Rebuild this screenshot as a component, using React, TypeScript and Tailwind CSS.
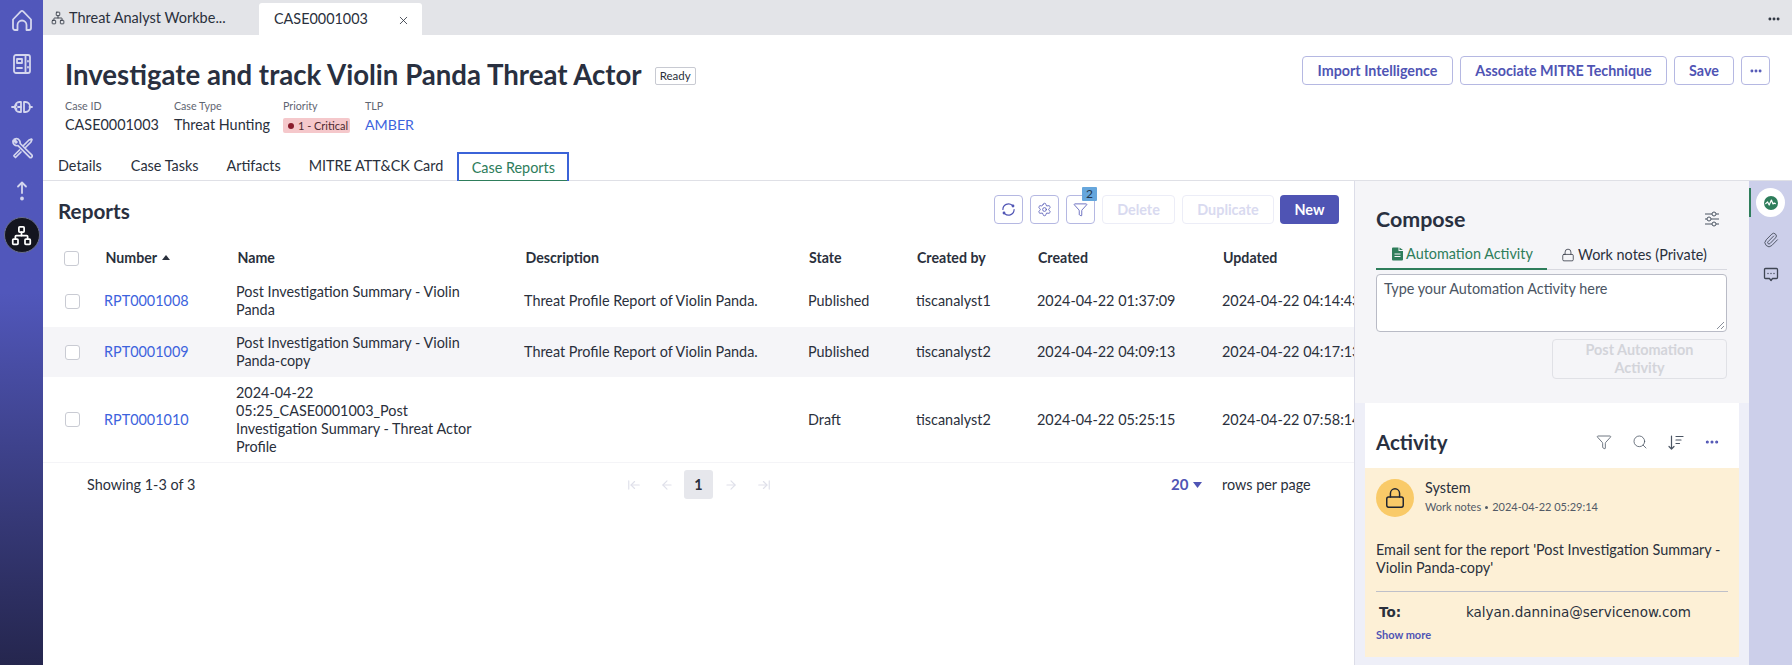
import React from "react";
import { Network, Settings, Funnel, Paperclip, Lock, Search, Ellipsis, X, ArrowLeft, ArrowRight, ArrowLeftToLine, ArrowRightToLine } from "lucide-react";

function HomeIcon() {
  return (
    <svg width="22" height="23" viewBox="0 0 22 23" fill="none" stroke="currentColor" strokeWidth="1.8" strokeLinecap="round" strokeLinejoin="round">
      <path d="M2 10.5L9.6 2.6a2 2 0 0 1 2.8 0L20 10.5V19a2 2 0 0 1-2 2h-2.5v-5a4.5 4.5 0 0 0-9 0v5H4a2 2 0 0 1-2-2z" />
    </svg>
  );
}
function BookIcon() {
  return (
    <svg width="20" height="22" viewBox="0 0 20 22" fill="none" stroke="currentColor" strokeWidth="1.8" strokeLinecap="round" strokeLinejoin="round">
      <rect x="2" y="2" width="16" height="18" rx="2" />
      <line x1="13.5" y1="2" x2="13.5" y2="20" />
      <rect x="5" y="6" width="5" height="4" />
      <line x1="5" y1="15" x2="10" y2="15" />
      <line x1="16" y1="8" x2="16" y2="8.5" />
      <line x1="16" y1="14" x2="16" y2="14.5" />
    </svg>
  );
}
function ApiIcon() {
  return (
    <svg width="22" height="14" viewBox="0 0 22 14" fill="none" stroke="currentColor" strokeWidth="1.8" strokeLinecap="round" strokeLinejoin="round">
      <path d="M1 7h2.5" /><path d="M18.5 7H21" />
      <path d="M10 2H8.5a4.5 5 0 0 0 0 10H10z" />
      <path d="M13 2h1.5a4.5 5 0 0 1 0 10H13z" />
      <path d="M3.5 7l2-2" /><path d="M3.5 7l2 2" />
      <path d="M7 7h3" />
    </svg>
  );
}
function ToolsIcon() {
  return (
    <svg width="22" height="22" viewBox="0 0 22 22" fill="none" stroke="currentColor" strokeWidth="1.7" strokeLinecap="round" strokeLinejoin="round">
      <path d="M8.5 3.5a4 4 0 0 0-5.2-1.2L6 5l-1 1-2.8-2.6A4 4 0 0 0 7 8.6l11.5 11.5a1.5 1.5 0 0 0 2.2-2.2L9.2 6.5c0-1-.2-2.2-.7-3z" />
      <path d="M12.5 8.5L18 3l2.5-1 .5.5-1 2.5-5.5 5.5" />
      <path d="M8.5 13L3 18.5a1.6 1.6 0 0 0 0 .5l1.5 1.5L10 15" />
    </svg>
  );
}
function UpIcon() {
  return (
    <svg width="14" height="22" viewBox="0 0 14 22" fill="none" stroke="currentColor" strokeWidth="1.8" strokeLinecap="round" strokeLinejoin="round">
      <path d="M7 13V3" /><path d="M3 6.5L7 2.5l4 4" />
      <circle cx="7" cy="18.5" r="1" fill="currentColor" />
    </svg>
  );
}
function SlidersIcon() {
  return (
    <svg width="16" height="16" viewBox="0 0 16 16" fill="none" stroke="#4b5563" strokeWidth="1">
      <path d="M1 3h7M12 3h3M1 8h2M7 8h8M1 13h7M12 13h3" />
      <circle cx="10" cy="3" r="2" /><circle cx="5" cy="8" r="2" /><circle cx="10" cy="13" r="2" />
    </svg>
  );
}
function SortIcon() {
  return (
    <svg width="16" height="15" viewBox="0 0 16 15" fill="none" stroke="#4b5563" strokeWidth="1.2" strokeLinecap="round" strokeLinejoin="round">
      <path d="M3.5 1v13M1 11.5L3.5 14 6 11.5" />
      <path d="M8 1.5h7M8 5h5M8 8.5h3.5" />
    </svg>
  );
}
function FileFilled() {
  return (
    <svg width="11" height="14" viewBox="0 0 11 13">
      <path fillRule="evenodd" fill="#2e7d5b" d="M0 1a1 1 0 0 1 1-1h5.5v3.5H11V12a1 1 0 0 1-1 1H1a1 1 0 0 1-1-1zM2.5 6v1h6V6zm0 2.5v1h6v-1zM7.5 0L11 2.5H7.5z" />
    </svg>
  );
}
function RefreshIcon() {
  return (
    <svg width="15" height="15" viewBox="0 0 15 15" fill="none" stroke="currentColor" strokeWidth="1.2" strokeLinecap="round">
      <path d="M1.9 7.5a5.6 5.6 0 0 1 9.3-4.2" />
      <path d="M13.1 7.5a5.6 5.6 0 0 1-9.3 4.2" />
      <circle cx="12" cy="4" r="0.8" fill="currentColor" />
      <circle cx="3" cy="11" r="0.8" fill="currentColor" />
    </svg>
  );
}
function PulseIcon() {
  return (
    <svg width="11" height="8" viewBox="0 0 11 8" fill="none" stroke="#ffffff" strokeWidth="1.2" strokeLinecap="round" strokeLinejoin="round">
      <path d="M0.7 4.6L2.6 3l1.6 3 2.2-5 1.6 4 1.2-1 1.1.6" />
    </svg>
  );
}
function MessageIcon() {
  return (
    <svg width="16" height="15" viewBox="0 0 16 15" fill="none" stroke="currentColor" strokeWidth="1.3" strokeLinejoin="round">
      <path d="M2.5 1.5h11a1 1 0 0 1 1 1v8a1 1 0 0 1-1 1H9.5L8 13.5 6.5 11.5h-4a1 1 0 0 1-1-1v-8a1 1 0 0 1 1-1z" />
      <circle cx="5" cy="6.5" r="0.7" fill="currentColor" stroke="none" />
      <circle cx="8" cy="6.5" r="0.7" fill="currentColor" stroke="none" />
      <circle cx="11" cy="6.5" r="0.7" fill="currentColor" stroke="none" />
    </svg>
  );
}

const rows = [
  { n: "RPT0001008", name: "Post Investigation Summary - Violin Panda", d: "Threat Profile Report of Violin Panda.", s: "Published", by: "tiscanalyst1", c: "2024-04-22 01:37:09", u: "2024-04-22 04:14:43", rowCls: "h-[52px]" },
  { n: "RPT0001009", name: "Post Investigation Summary - Violin Panda-copy", d: "Threat Profile Report of Violin Panda.", s: "Published", by: "tiscanalyst2", c: "2024-04-22 04:09:13", u: "2024-04-22 04:17:13", rowCls: "h-[50px] bg-[#f5f5f8]" },
  { n: "RPT0001010", name: "2024-04-22 05:25_CASE0001003_Post Investigation Summary - Threat Actor Profile", d: "", s: "Draft", by: "tiscanalyst2", c: "2024-04-22 05:25:15", u: "2024-04-22 07:58:14", rowCls: "h-[86px] border-b border-[#f4f4f7]" },
];

const grid = "grid grid-cols-[61px_132px_288px_284px_108px_121px_185px_132px] items-center";

function Box() {
  return <span className="block h-[15px] w-[15px] rounded-[3px] border border-[#c9cbd3] bg-white" />;
}

export default function App() {
  return (
    <div className="flex h-[665px] w-[1792px] overflow-hidden bg-white font-['Lato',sans-serif] text-[#2a303c]">
      <aside className="flex w-[43px] shrink-0 flex-col items-center bg-gradient-to-b from-[#5157bb] from-44% to-[#25264e] pt-[9px] text-[#d4d6ee]">
        <HomeIcon />
        <div className="mt-[21px]"><BookIcon /></div>
        <div className="mt-[25px]"><ApiIcon /></div>
        <div className="mt-[23px]"><ToolsIcon /></div>
        <div className="mt-[21px]"><UpIcon /></div>
        <div className="mt-[15px] flex h-[36px] w-[36px] items-center justify-center rounded-full border border-[#6a6f8c] bg-[#14151f] text-white">
          <Network size={21} strokeWidth={2} />
        </div>
      </aside>

      <div className="flex min-w-0 flex-1 flex-col">
        <div className="flex h-[35px] shrink-0 items-end bg-[#e3e4e8] pl-[8px] pr-[11px]">
          <div className="flex h-[35px] w-[208px] items-center gap-[4px] text-[14.5px] text-[#2a303c]">
            <Network size={14} strokeWidth={1.4} />
            <span>Threat Analyst Workbe...</span>
          </div>
          <div className="flex h-[32px] w-[163px] items-center justify-between rounded-t-[3px] bg-white pl-[15px] pr-[12px] text-[14.4px]">
            <span>CASE0001003</span>
            <X size={13} strokeWidth={1.5} className="mt-[2px]" />
          </div>
          <div className="flex-1" />
          <Ellipsis size={14} strokeWidth={3} className="mb-[9px]" />
        </div>

        <div className="flex h-[117px] shrink-0 justify-between pl-[22px] pr-[22px]">
          <div className="pt-[22px]">
            <div className="flex items-center gap-[13px]">
              <h1 className="text-[27.6px] font-bold leading-[36px] text-[#293040]">Investigate and track Violin Panda Threat Actor</h1>
              <span className="mt-[1px] flex h-[18px] items-center rounded-[2px] border border-[#c8cad2] px-[4px] text-[11.5px] leading-none">Ready</span>
            </div>
            <div className="mt-[6px] flex gap-[15px]">
              <div>
                <div className="text-[10.7px] leading-[14px] text-[#5f6672]">Case ID</div>
                <div className="mt-[2px] text-[14.4px] leading-[20px]">CASE0001003</div>
              </div>
              <div className="-mr-[2px]">
                <div className="text-[10.7px] leading-[14px] text-[#5f6672]">Case Type</div>
                <div className="mt-[2px] text-[14.4px] leading-[20px]">Threat Hunting</div>
              </div>
              <div>
                <div className="text-[10.7px] leading-[14px] text-[#5f6672]">Priority</div>
                <div className="mt-[5px] flex h-[15px] w-[67px] items-center gap-[4px] whitespace-nowrap rounded-[2px] bg-[#f5c8cb] pl-[5px] text-[11px] leading-none text-[#4d2a30]">
                  <span className="h-[6px] w-[6px] shrink-0 rounded-full bg-[#8a1c2c]" />1 - Critical
                </div>
              </div>
              <div>
                <div className="text-[10.7px] leading-[14px] text-[#5f6672]">TLP</div>
                <div className="mt-[2px] text-[14.2px] leading-[20px] text-[#3d63dd]">AMBER</div>
              </div>
            </div>
          </div>
          <div className="flex gap-[7px] pt-[21px] text-[14.3px] font-bold text-[#4f54b4]">
            <button className="h-[29px] w-[151px] rounded-[4px] border border-[#b5b8e2]">Import Intelligence</button>
            <button className="h-[29px] w-[207px] rounded-[4px] border border-[#b5b8e2]">Associate MITRE Technique</button>
            <button className="h-[29px] w-[60px] rounded-[4px] border border-[#b5b8e2]">Save</button>
            <button className="flex h-[29px] w-[29px] items-center justify-center rounded-[4px] border border-[#b5b8e2]"><Ellipsis size={14} strokeWidth={3} /></button>
          </div>
        </div>

        <div className="flex h-[29px] shrink-0 border-b border-[#dfe0e6] text-[14.4px]">
          <div className="flex h-[28px] items-center px-[15px]">Details</div>
          <div className="flex h-[28px] items-center px-[14px]">Case Tasks</div>
          <div className="flex h-[28px] items-center px-[14px]">Artifacts</div>
          <div className="flex h-[28px] items-center px-[14px]">MITRE ATT&amp;CK Card</div>
          <div className="flex h-[29px] w-[112px] items-center justify-center border-2 border-b-0 border-[#3b63d8] text-[#2e7d5b] shadow-[inset_0_-1px_0_#2e7d5b]">Case Reports</div>
        </div>

        <div className="flex min-h-0 flex-1">
          <section className="w-[1311px] shrink-0 overflow-hidden">
            <div className="flex items-center justify-between pl-[15px] pr-[15px] pt-[14px]">
              <h2 className="translate-y-[2px] text-[20.7px] font-bold leading-[29px] text-[#293040]">Reports</h2>
              <div className="flex gap-[7px] text-[#4f54b4]">
                <button className="flex h-[29px] w-[29px] items-center justify-center rounded-[4px] border border-[#b5b8e2]"><RefreshIcon /></button>
                <button className="flex h-[29px] w-[29px] items-center justify-center rounded-[4px] border border-[#b5b8e2]"><Settings size={15} strokeWidth={1.3} /></button>
                <button className="relative flex h-[29px] w-[29px] items-center justify-center rounded-[4px] border border-[#b5b8e2]">
                  <Funnel size={15} strokeWidth={1.3} />
                  <span className="absolute -right-[3px] -top-[9px] flex h-[14px] w-[15px] items-center justify-center rounded-[1px] bg-[#66a6dc] text-[12px] leading-none text-[#24364d]">2</span>
                </button>
                <button className="h-[29px] w-[73px] rounded-[4px] border border-[#ecedf7] text-[14.4px] font-bold text-[#d9daf0]">Delete</button>
                <button className="h-[29px] w-[92px] rounded-[4px] border border-[#ecedf7] text-[14.4px] font-bold text-[#d9daf0]">Duplicate</button>
                <button className="-ml-[1px] h-[29px] w-[59px] rounded-[4px] bg-[#4f54b4] text-[14.4px] font-bold text-white">New</button>
              </div>
            </div>

            <div className={`${grid} mt-[17px] h-[34px] text-[14.2px] font-bold`}>
              <div className="pl-[21px]"><Box /></div>
              <div className="flex items-center gap-[5px] pl-[1.5px]">Number
                <svg width="8" height="5" viewBox="0 0 8 5"><path d="M4 0l4 5H0z" fill="#2a303c" /></svg>
              </div>
              <div className="pl-[1.5px]">Name</div>
              <div className="pl-[1.5px]">Description</div>
              <div className="pl-[1px]">State</div>
              <div className="pl-[1px]">Created by</div>
              <div className="pl-[1px]">Created</div>
              <div className="pl-[1px]">Updated</div>
            </div>

            {rows.map((r) => (
              <div key={r.n} className={`${grid} ${r.rowCls} text-[14.4px] leading-[18px]`}>
                <div className="pl-[22px]"><Box /></div>
                <div className="text-[#3d63dd]">{r.n}</div>
                <div className="w-[238px]">{r.name}</div>
                <div>{r.d}</div>
                <div>{r.s}</div>
                <div>{r.by}</div>
                <div>{r.c}</div>
                <div className="whitespace-nowrap">{r.u}</div>
              </div>
            ))}

            <div className="mt-[7px] grid h-[29px] grid-cols-[584px_544px_51px_1fr] items-center text-[14.4px]">
              <div className="pl-[44px]">Showing 1-3 of 3</div>
              <div className="flex items-center text-[#dfe0ea]">
                <ArrowLeftToLine size={14} />
                <ArrowLeft size={14} className="ml-[19px]" />
                <span className="ml-[10px] flex h-[29px] w-[29px] items-center justify-center rounded-[3px] bg-[#e6e7ec] font-bold text-[#2a303c]">1</span>
                <ArrowRight size={14} className="ml-[11px]" />
                <ArrowRightToLine size={14} className="ml-[19px]" />
              </div>
              <div className="flex items-center gap-[5px] font-bold text-[#4f54b4]">
                <span className="text-[15px]">20</span>
                <svg width="9" height="6" viewBox="0 0 9 6"><path d="M0 0h9L4.5 6z" fill="#4f54b4" /></svg>
              </div>
              <div>rows per page</div>
            </div>
          </section>

          <div className="flex w-[395px] shrink-0 flex-col border-l border-[#dcdde8] bg-[#f5f5f8]">
            <div className="h-[222px] shrink-0 pl-[21px] pr-[22px] pt-[23px]">
              <div className="flex h-[30px] items-center justify-between pr-[7px]">
                <h2 className="text-[21.4px] font-bold leading-[30px] text-[#293040]">Compose</h2>
                <SlidersIcon />
              </div>
              <div className="mt-[6px] flex h-[30px] border-b border-[#d8d9e0] text-[14.4px]">
                <div className="-mb-[1px] flex w-[171px] items-center justify-center gap-[3px] border-b-2 border-[#2e7d5b] pl-[2px] text-[#2e7d5b]"><FileFilled />Automation Activity</div>
                <div className="flex flex-1 items-center justify-center gap-[3px] pr-[6px]"><Lock size={14} strokeWidth={1.3} />Work notes (Private)</div>
              </div>
              <div className="relative mt-[4px] h-[58px] rounded-[4px] border border-[#b9bbc6] bg-white px-[7px] py-[5px] text-[14.4px] leading-[18px] text-[#4b5563]">
                Type your Automation Activity here
                <svg width="9" height="9" viewBox="0 0 9 9" className="absolute bottom-[1px] right-[1px]" stroke="#6b7280" strokeWidth="0.8"><path d="M1 8l7-7M5 8l3-3" /></svg>
              </div>
              <div className="mt-[7px] flex justify-end">
                <button className="h-[40px] w-[175px] rounded-[4px] border border-[#e0e1e6] text-[14.4px] font-bold leading-[18px] text-[#d3d4da]">Post Automation<br />Activity</button>
              </div>
            </div>
            <div className="min-h-0 flex-1 bg-[#eeeff8] px-[10px]">
              <div className="flex h-[65px] items-end justify-between bg-white pb-[11px] pl-[11px] pr-[19px]">
                <h2 className="text-[20.5px] font-bold leading-[30px] text-[#293040]">Activity</h2>
                <div className="flex h-[30px] items-center gap-[20px] text-[#4b5563]">
                  <Funnel size={16} strokeWidth={1.2} />
                  <Search size={16} strokeWidth={1.2} />
                  <SortIcon />
                  <Ellipsis size={16} strokeWidth={2.6} className="text-[#4f54b4]" />
                </div>
              </div>
              <div className="h-[189px] bg-[#fdf0d6] px-[11px] pt-[11px]">
                <div className="flex gap-[11px]">
                  <div className="flex h-[38px] w-[38px] items-center justify-center rounded-full bg-[#f9ca68]"><Lock size={22} strokeWidth={1.6} className="text-[#1f2430]" /></div>
                  <div>
                    <div className="text-[14.4px] leading-[18px]">System</div>
                    <div className="mt-[2px] flex items-center gap-[4px] text-[11px] leading-[16px] text-[#525a66]">Work notes<span className="h-[3px] w-[3px] rounded-full bg-[#525a66]" />2024-04-22 05:29:14</div>
                  </div>
                </div>
                <p className="mt-[24px] text-[14.4px] leading-[18px]">Email sent for the report 'Post Investigation Summary - Violin Panda-copy'</p>
                <div className="mt-[14px] border-t border-[#bfc0c9] pt-[11px] font-['Verdana','DejaVu_Sans',sans-serif] text-[13.5px] leading-[18px]">
                  <div className="flex pl-[3px]">
                    <span className="w-[87px] font-bold">To:</span>
                    <span>kalyan.dannina@servicenow.com</span>
                  </div>
                </div>
                <div className="mt-[6px] text-[11px] font-bold leading-[16px] text-[#4f54b4]">Show more</div>
              </div>
            </div>
          </div>

          <div className="relative flex w-[43px] shrink-0 flex-col items-center bg-[#cccfea] pt-[7px] text-[#3f4654]">
            <span className="absolute left-0 top-[7px] h-[29px] w-[1.5px] bg-[#2e7d5b]" />
            <div className="flex h-[29px] w-[29px] items-center justify-center rounded-full bg-white">
              <span className="flex h-[14px] w-[14px] items-center justify-center rounded-full bg-[#2e7d5b]"><PulseIcon /></span>
            </div>
            <Paperclip size={16} strokeWidth={1.3} className="mt-[15px]" />
            <div className="mt-[19px]"><MessageIcon /></div>
          </div>
        </div>
      </div>
    </div>
  );
}
